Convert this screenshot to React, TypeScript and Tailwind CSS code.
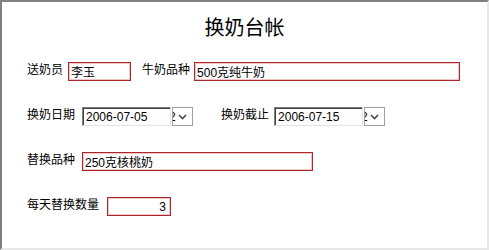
import React from 'react'

const font = { fontFamily: '"Liberation Sans", "Noto Sans CJK SC", sans-serif' }

const redBox =
  'h-[19px] border border-[#a8282c] shadow-[inset_0_0_0_1px_#f2c4c4] bg-white px-[2px] text-[12px] text-black outline-none'

const DateField = ({ value }: { value: string }) => (
  <div className="flex items-start gap-[1px]">
    <input
      readOnly
      defaultValue={value}
      className="h-[19px] w-[89px] border border-t-[#808080] border-l-[#808080] border-r-[#e4e4e4] border-b-[#e4e4e4] shadow-[inset_1px_1px_0_#404040] bg-white pl-[3px] text-[12px] text-black outline-none"
    />
    <div className="h-[19px] w-[21px] border border-[#a0a0a0] bg-white flex items-center overflow-hidden">
      <span className="text-[12px] leading-none -ml-[4px] w-[8px]">2</span>
      <svg width="9" height="6" viewBox="0 0 9 6" className="ml-[1px]">
        <path d="M1 1 L4.5 4.5 L8 1" stroke="#4a4a4a" strokeWidth="1.6" fill="none" />
      </svg>
    </div>
  </div>
)

const Label = ({ children, className = '' }: { children: React.ReactNode; className?: string }) => (
  <span className={`text-[12px] leading-[14px] text-black ${className}`}>{children}</span>
)

export default function App() {
  return (
    <div
      style={font}
      className="w-[489px] h-[250px] bg-white border-t-2 border-l-2 border-t-[#808080] border-l-[#808080] border-r-2 border-b-2 border-r-[#e8e8e8] border-b-[#e8e8e8] overflow-hidden"
    >
      <h1 className="pt-[12px] mb-[20px] text-center text-[20px] leading-[28px] text-black font-normal">换奶台帐</h1>

      <div className="flex flex-col gap-[26px] pl-[25px]">
        <div className="flex items-start">
          <Label className="mt-[1px]">送奶员</Label>
          <input readOnly defaultValue="李玉" className={`${redBox} ml-[5px] w-[63px]`} />
          <Label className="ml-[11px] mt-[1px]">牛奶品种</Label>
          <input readOnly defaultValue="500克纯牛奶" className={`${redBox} ml-[4px] w-[266px]`} />
        </div>

        <div className="flex items-start">
          <Label className="mt-[1px]">换奶日期</Label>
          <div className="ml-[7px]">
            <DateField value="2006-07-05" />
          </div>
          <Label className="ml-[28px] mt-[1px]">换奶截止</Label>
          <div className="ml-[5px]">
            <DateField value="2006-07-15" />
          </div>
        </div>

        <div className="flex items-start">
          <Label className="mt-[1px]">替换品种</Label>
          <input readOnly defaultValue="250克核桃奶" className={`${redBox} ml-[7px] w-[231px]`} />
        </div>

        <div className="flex items-start">
          <Label className="mt-[1px]">每天替换数量</Label>
          <input readOnly defaultValue="3" className={`${redBox} ml-[8px] w-[64px] text-right pr-[4px]`} />
        </div>
      </div>
    </div>
  )
}
